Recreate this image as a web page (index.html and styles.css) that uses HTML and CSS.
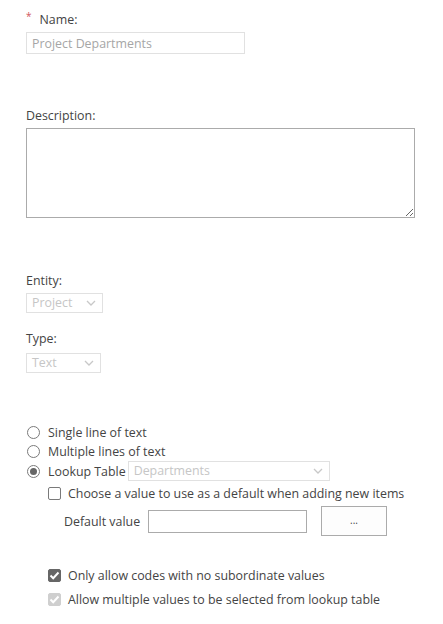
FILE: index.html
```html
<!DOCTYPE html>
<html>
<head>
<meta charset="utf-8">
<link rel="stylesheet" href="styles.css">
</head>
<body>
<div class="form">
  <div class="label-row name-label"><span class="req">*</span>Name:</div>
  <div class="text-input name-input">Project Departments</div>

  <div class="label-row desc-label">Description:</div>
  <textarea class="desc-area"></textarea>

  <div class="label-row entity-label">Entity:</div>
  <div class="select entity-select"><span>Project</span><svg class="chev" width="10" height="6" viewBox="0 0 10 6"><path d="M1 1 L5 5 L9 1" fill="none" stroke="#c8c8c8" stroke-width="1.3"/></svg></div>

  <div class="label-row type-label">Type:</div>
  <div class="select type-select"><span>Text</span><svg class="chev" width="10" height="6" viewBox="0 0 10 6"><path d="M1 1 L5 5 L9 1" fill="none" stroke="#c8c8c8" stroke-width="1.3"/></svg></div>

  <div class="radios">
    <div class="radio-row"><span class="radio"></span><span>Single line of text</span></div>
    <div class="radio-row"><span class="radio"></span><span>Multiple lines of text</span></div>
    <div class="radio-row"><span class="radio checked"></span><span>Lookup Table</span>
      <div class="select lookup-select"><span>Departments</span><svg class="chev" width="10" height="6" viewBox="0 0 10 6"><path d="M1 1 L5 5 L9 1" fill="none" stroke="#c8c8c8" stroke-width="1.3"/></svg></div>
    </div>
  </div>

  <div class="check-row default-check"><span class="check"></span><span>Choose a value to use as a default when adding new items</span></div>
  <div class="default-row">
    <span class="default-label">Default value</span>
    <div class="default-input"></div>
    <div class="dots-btn">...</div>
  </div>

  <div class="check-row only-check"><span class="check checked"><svg width="11" height="9" viewBox="0 0 11 9"><path d="M1.5 4.5 L4.2 7.2 L9.5 1.5" fill="none" stroke="#fff" stroke-width="2"/></svg></span><span>Only allow codes with no subordinate values</span></div>
  <div class="check-row multi-check"><span class="check checked disabled"><svg width="11" height="9" viewBox="0 0 11 9"><path d="M1.5 4.5 L4.2 7.2 L9.5 1.5" fill="none" stroke="#fff" stroke-width="2"/></svg></span><span class="disabled-text">Allow multiple values to be selected from lookup table</span></div>
</div>
</body>
</html>
```
FILE: styles.css
```css
html, body {
  margin: 0;
  padding: 0;
  background: #fff;
}
body {
  font-family: "Open Sans", "Noto Sans", "Liberation Sans", sans-serif;
  font-size: 12.4px;
  color: #444;
}
.form {
  padding: 11px 0 0 26px;
}
.label-row {
  height: 18px;
  line-height: 18px;
}
.req {
  color: #d0545c;
  font-size: 10px;
  position: relative;
  top: -4px;
  margin-right: 8px;
}
.text-input {
  box-sizing: border-box;
  margin-top: 3px;
  width: 219px;
  height: 22px;
  border: 1px solid #e1e1e1;
  color: #a6a6a6;
  line-height: 20px;
  padding: 1px 0 0 5px;
}
.desc-label {
  margin-top: 53px;
}
.desc-area {
  display: block;
  box-sizing: border-box;
  margin: 3px 0 0 0;
  width: 389px;
  height: 90px;
  border: 1px solid #ababab;
  border-radius: 0;
  padding: 0;
  outline: none;
  resize: both;
}
.entity-label {
  margin-top: 54px;
}
.select {
  box-sizing: border-box;
  display: flex;
  align-items: center;
  justify-content: space-between;
  height: 20px;
  border: 1px solid #e1e1e1;
  color: #c6c6c6;
  padding: 0 6px 0 5px;
  line-height: 18px;
}
.entity-select {
  margin-top: 3px;
  width: 77px;
}
.type-label {
  margin-top: 17px;
}
.type-select {
  margin-top: 5px;
  width: 75px;
}
.radios {
  margin-top: 50px;
}
.radio-row {
  display: flex;
  align-items: center;
  height: 19px;
  gap: 8px;
  color: #444;
}
.radio {
  box-sizing: border-box;
  width: 13px;
  height: 13px;
  border: 1px solid #7a7a7a;
  border-radius: 50%;
  margin-left: 1px;
  display: flex;
  align-items: center;
  justify-content: center;
  flex: none;
}
.radio.checked::after {
  content: "";
  width: 7px;
  height: 7px;
  border-radius: 50%;
  background: #666;
}
.lookup-select {
  margin-left: -6px;
  width: 202px;
  height: 20px;
}
.radio-row:last-child {
  height: 20px;
}
.check-row {
  display: flex;
  align-items: center;
  gap: 7px;
  height: 24px;
  margin-left: 22px;
}
.check {
  box-sizing: border-box;
  width: 13px;
  height: 13px;
  border: 1px solid #7a7a7a;
  border-radius: 2px;
  flex: none;
  display: flex;
  align-items: center;
  justify-content: center;
}
.check.checked {
  background: #666;
  border-color: #666;
}
.check.checked.disabled {
  background: #cfcfcf;
  border-color: #cfcfcf;
}
.default-row {
  display: flex;
  align-items: center;
  margin: 1px 0 0 38px;
  height: 30px;
}
.default-label {
  width: 84px;
}
.default-input {
  box-sizing: border-box;
  width: 159px;
  height: 23px;
  border: 1px solid #ababab;
}
.dots-btn {
  box-sizing: border-box;
  margin-left: 14px;
  width: 66px;
  height: 30px;
  border: 1px solid #ababab;
  background: #fdfdfd;
  text-align: center;
  line-height: 26px;
  font-size: 10px;
  color: #444;
}
.only-check {
  margin-top: 27px;
}
.disabled-text {
  color: #444;
}
```
